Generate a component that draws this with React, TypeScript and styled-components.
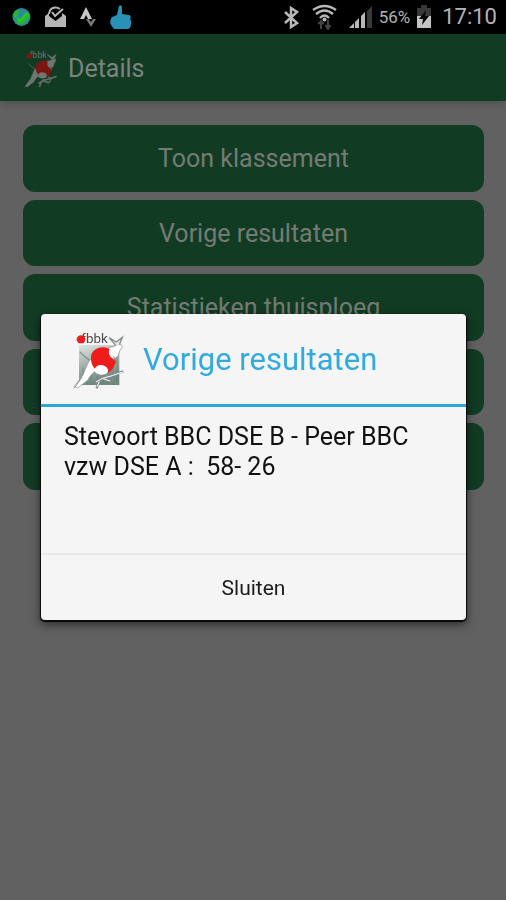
import React from "react";
import styled, { createGlobalStyle } from "styled-components";

const GlobalStyle = createGlobalStyle`
  * { box-sizing: border-box; }
  body {
    margin: 0;
    background: #616161;
    font-family: Roboto, "Liberation Sans", sans-serif;
  }
  button { font-family: inherit; border: 0; cursor: pointer; }
`;

const Screen = styled.div`
  display: flex;
  flex-direction: column;
  min-height: 100vh;
`;

const StatusBar = styled.header`
  display: flex;
  align-items: center;
  justify-content: space-between;
  height: 34px;
  padding: 0 9px 0 12px;
  background: #000;
  color: #b4b4b4;
`;

const StatusGroup = styled.div<{ $gap: number }>`
  display: flex;
  align-items: center;
  gap: ${(p) => p.$gap}px;
`;

const Percent = styled.span`
  font-size: 17px;
  line-height: 34px;
`;

const Clock = styled.time`
  font-size: 22px;
  line-height: 34px;
  margin-left: 4px;
`;

const AppBar = styled.div`
  display: flex;
  align-items: center;
  gap: 10px;
  height: 67px;
  padding: 2px 24px 0;
  background: #123b24;
  box-shadow: 0 2px 8px rgba(0, 0, 0, 0.2);
`;

const AppTitle = styled.h1`
  margin: 0;
  font-size: 25px;
  font-weight: 400;
  line-height: 32px;
  color: #7c847d;
`;

const Menu = styled.main`
  display: grid;
  grid-auto-rows: 1fr;
  gap: 8px;
  min-height: 365px;
  margin: 24px 22px 0 23px;
`;

const MenuButton = styled.button`
  padding: 2px 0 0;
  border-radius: 12px;
  background: #123b24;
  color: #747b74;
  font-size: 25px;
  line-height: 32px;
`;

const Overlay = styled.div`
  position: fixed;
  inset: 34px 0 0;
  display: flex;
  align-items: center;
  justify-content: center;
  padding: 0 40px 0 41px;
`;

const Dialog = styled.section`
  width: 100%;
  border-radius: 4px;
  background: #f5f5f5;
  color: #111;
  box-shadow: 0 1px 1px 1px #080808, 0 4px 10px 1px rgba(0, 0, 0, 0.5);
`;

const DialogHeader = styled.div`
  display: flex;
  align-items: center;
  gap: 18px;
  height: 93px;
  padding: 2px 32px 0;
  border-bottom: 3px solid #27a9dc;
`;

const DialogTitle = styled.h2`
  margin: 0;
  font-size: 31px;
  font-weight: 400;
  line-height: 40px;
  color: #33aadd;
`;

const DialogText = styled.p`
  min-height: 146px;
  margin: 0;
  padding: 15px 23px;
  font-size: 25px;
  line-height: 30px;
  white-space: pre-wrap;
`;

const CloseButton = styled.button`
  display: block;
  width: 100%;
  height: 67px;
  border-top: 2px solid #e8e8e8;
  border-radius: 0 0 4px 4px;
  background: transparent;
  color: #1c1c1c;
  font-size: 21px;
  line-height: 28px;
`;

function ClubLogo({ width, height, dim }: { width: number; height: number; dim?: boolean }) {
  const white = dim ? "#707670" : "#ffffff";
  const red = dim ? "#7d1513" : "#ef1c1c";
  const line = dim ? "#596860" : "#858b8a";
  return (
    <svg width={width} height={height} viewBox="36 24 156 186" aria-hidden="true">
      {!dim && (
        <>
          <defs>
            <linearGradient id="panel" x1="0" y1="0" x2="0.3" y2="1">
              <stop offset="0" stopColor="#dfe6e3" />
              <stop offset="0.5" stopColor="#a3b2ac" />
              <stop offset="1" stopColor="#718a81" />
            </linearGradient>
          </defs>
          <rect x="54" y="72" width="121" height="120" fill="url(#panel)" />
          <path
            d="M66 140V192M78 150V192M90 155V192M108 165V192M126 170V192M142 150V192M156 120V192M168 100V192"
            stroke="#5f7b71"
            strokeWidth="3"
            opacity="0.6"
          />
        </>
      )}
      <text x="61" y="67" fontFamily="Roboto, sans-serif" fontSize="40" fill={dim ? "#6d776f" : "#4c4c4c"}>fbbk</text>
      <ellipse cx="60" cy="55" rx="13" ry="12" fill={red} />
      <path d="M92 122C82 114 69 108 56 92" fill="none" stroke={line} strokeWidth="4" />
      <path d="M96 108C82 118 75 140 66 162L40 196L50 201L80 178C86 165 96 156 110 144Z" fill={white} stroke={line} strokeWidth="2" />
      <path d="M137 86C143 74 157 82 166 72L180 70L184 78L176 90L171 106L157 115L143 108Z" fill={white} stroke={line} strokeWidth="2" />
      <path d="M164 73L144 50L166 63L184 49L175 71" fill={dim ? white : "#e4e7e6"} stroke={line} strokeWidth="4" />
      <path d="M90 112C88 84 122 70 146 84C138 99 149 112 166 118C160 138 152 153 139 156C132 143 120 133 101 143C92 133 90 122 90 112Z" fill={red} />
      <path d="M100 148C104 128 130 127 140 143C146 156 132 161 119 161C109 159 101 156 100 148Z" fill={white} />
      <path d="M102 184L123 170L151 162L187 151M107 202L113 181L129 163M122 171L148 181L159 171M148 153L165 165" fill="none" stroke={line} strokeWidth="7" />
      <path d="M105 183L125 172L154 164L185 153M108 197L115 182M124 172L147 180" fill="none" stroke={white} strokeWidth="3" />
      <path d="M63 168L46 193L38 202M157 106L166 121L153 111" fill="none" stroke={line} strokeWidth="3" />
    </svg>
  );
}

function GlobeIcon() {
  return (
    <svg width="19" height="20" viewBox="0 0 19 20" aria-hidden="true">
      <circle cx="9.5" cy="10" r="9" fill="#278b9c" />
      <path d="M3 4C7 2 8 5 6 8L2 12L1 8ZM16 5L18 9L14 15L7 18L3 15L8 12L12 9Z" fill="#27b331" />
      <path d="M5 11L8 14L15 6" fill="none" stroke="#2ccb22" strokeWidth="2" />
    </svg>
  );
}

function InboxIcon() {
  return (
    <svg width="21" height="22" viewBox="0 0 21 22" aria-hidden="true">
      <path d="M0 10L4 7V10L10.500 15L17 10V7L21 10V21H0Z" fill="#b6b6b6" />
      <path d="M4 8C5 0 12 1 15 3M7 6L10 10L18 3" fill="none" stroke="#b6b6b6" strokeWidth="2" />
    </svg>
  );
}

function RouteIcon() {
  return (
    <svg width="16" height="22" viewBox="0 0 16 22" aria-hidden="true">
      <path d="M0 13L6 1L12 13H8L6 9L4 13Z" fill="#c8c8c8" />
      <path d="M6 13H9L11 16L13 13H16L11 21Z" fill="#777" />
    </svg>
  );
}

function ThumbIcon() {
  return (
    <svg width="22" height="24" viewBox="0 0 22 24" aria-hidden="true">
      <path d="M7 10L9 1Q12 -1 12 3V9L19 10Q22 11 20 14Q22 16 21 19Q21 24 17 24H4L1 20Q-1 16 2 12Z" fill="#2792b3" />
    </svg>
  );
}

function BluetoothIcon() {
  return (
    <svg width="17" height="23" viewBox="0 0 17 23" aria-hidden="true">
      <path d="M2 6L14 17L8 21V2L14 6L2 17" fill="none" stroke="#b8b8b8" strokeWidth="2.5" />
    </svg>
  );
}

function WifiIcon() {
  return (
    <svg width="25" height="26" viewBox="0 0 25 26" aria-hidden="true">
      <g fill="none" stroke="#b8b8b8" strokeWidth="2.4">
        <path d="M1 6Q12.500 -2 24 6M4 10Q12.500 3 21 10M8 14Q12.500 9 17 14" />
      </g>
      <circle cx="12.5" cy="15.5" r="2" fill="#b8b8b8" />
      <path d="M9 25V18M6.500 20L9 17L11.500 20M16 16V24M13.500 21L16 25L18.500 21" fill="none" stroke="#444" strokeWidth="2" />
    </svg>
  );
}

function SignalIcon() {
  return (
    <svg width="24" height="24" viewBox="0 0 24 24" aria-hidden="true">
      <path d="M0 23L5 18V23ZM6 17L10 13V23H6ZM12 11L16 7V23H12Z" fill="#b8b8b8" />
      <path d="M18 6L23 1V23H18Z" fill="#393939" />
    </svg>
  );
}

function BatteryIcon() {
  return (
    <svg width="16" height="24" viewBox="0 0 16 24" aria-hidden="true">
      <path d="M1 3H5V0H11V3H15V12H1Z" fill="#393939" />
      <path d="M1 11H15V23H1Z" fill="#c4c4c4" />
      <path d="M10 5L3 14H7L6 20L13 11H9Z" fill="#050505" />
    </svg>
  );
}

const actions = [
  { name: "Toon klassement", label: "Toon klassement" },
  { name: "Vorige resultaten", label: "Vorige resultaten" },
  { name: "Statistieken thuisploeg", label: "Statistieken thuisploeg" },
  { name: "Actie 4", label: "" },
  { name: "Actie 5", label: "" },
];

export default function App() {
  return (
    <Screen>
      <GlobalStyle />
      <StatusBar>
        <StatusGroup $gap={14}>
          <GlobeIcon />
          <InboxIcon />
          <RouteIcon />
          <ThumbIcon />
        </StatusGroup>
        <StatusGroup $gap={6}>
          <StatusGroup $gap={12}>
            <BluetoothIcon />
            <WifiIcon />
            <SignalIcon />
          </StatusGroup>
          <Percent>56%</Percent>
          <BatteryIcon />
          <Clock>17:10</Clock>
        </StatusGroup>
      </StatusBar>
      <AppBar>
        <ClubLogo width={34} height={40} dim />
        <AppTitle>Details</AppTitle>
      </AppBar>
      <Menu>
        {actions.map((action) => (
          <MenuButton key={action.name} type="button" aria-label={action.name}>
            {action.label}
          </MenuButton>
        ))}
      </Menu>
      <Overlay>
        <Dialog role="dialog" aria-modal="true" aria-labelledby="dialog-title">
          <DialogHeader>
            <ClubLogo width={52} height={62} />
            <DialogTitle id="dialog-title">Vorige resultaten</DialogTitle>
          </DialogHeader>
          <DialogText>{"Stevoort BBC DSE B - Peer BBC vzw DSE A :  58- 26"}</DialogText>
          <CloseButton type="button">Sluiten</CloseButton>
        </Dialog>
      </Overlay>
    </Screen>
  );
}
